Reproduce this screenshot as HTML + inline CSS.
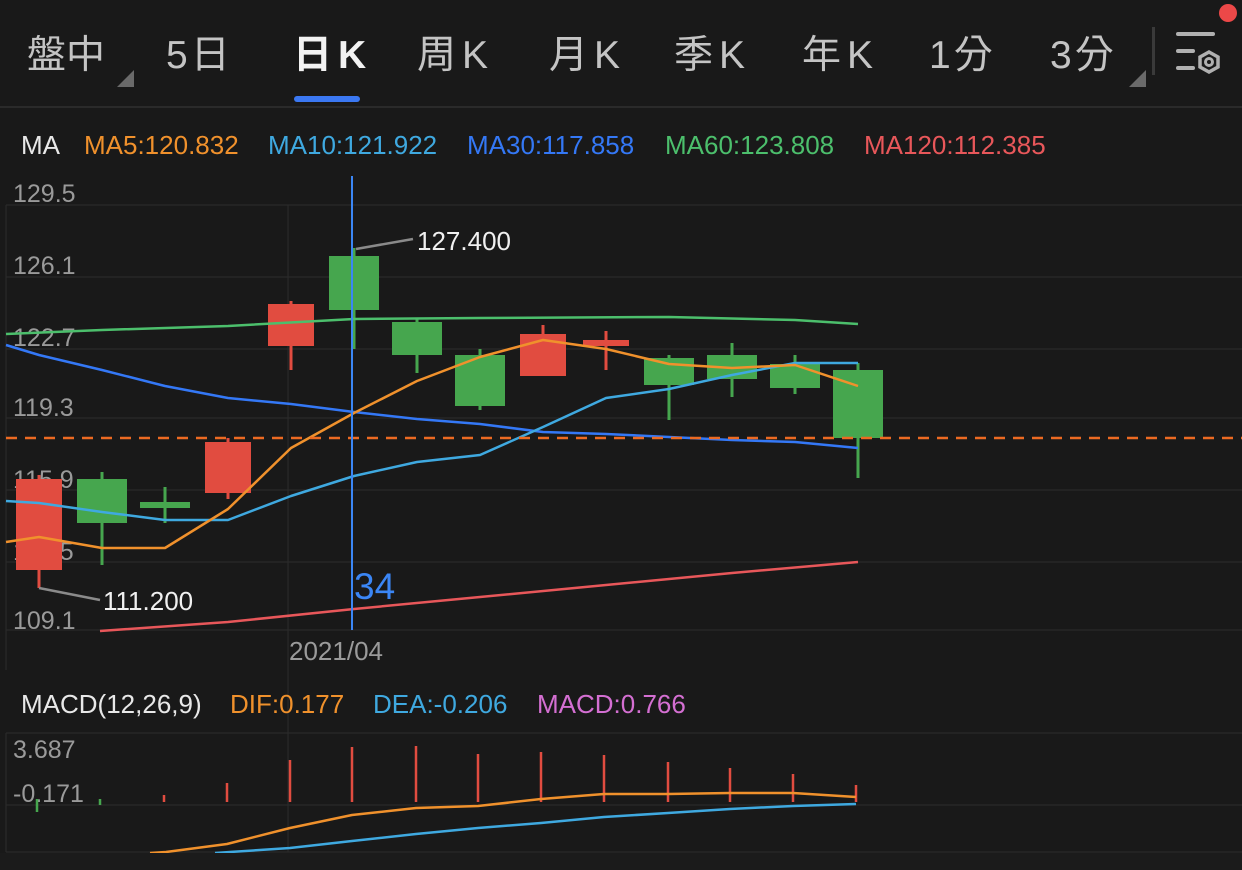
<!DOCTYPE html>
<html><head><meta charset="utf-8"><style>
html,body{margin:0;padding:0;background:#191919;}
svg{display:block;}
text{font-family:"Liberation Sans","Noto Sans CJK TC",sans-serif;}
</style></head><body>
<svg width="1242" height="870" viewBox="0 0 1242 870" xmlns="http://www.w3.org/2000/svg">
<rect width="1242" height="870" fill="#191919"/>
<!-- header -->
<g font-size="39" fill="#c4c4c4">
<text x="27" y="68">盤中</text>
<text x="166" y="68" letter-spacing="3">5日</text>
<text x="293" y="68" fill="#f2f2f2" font-weight="bold" letter-spacing="6">日K</text>
<text x="417" y="68" letter-spacing="6">周K</text>
<text x="549" y="68" letter-spacing="6">月K</text>
<text x="674" y="68" letter-spacing="6">季K</text>
<text x="802" y="68" letter-spacing="6">年K</text>
<text x="929" y="68" letter-spacing="3">1分</text>
<text x="1050" y="68" letter-spacing="3">3分</text>
</g>
<polygon points="134,70 134,87 117,87" fill="#6a6a6a"/>
<polygon points="1146,70 1146,87 1129,87" fill="#6a6a6a"/>
<rect x="294" y="96" width="66" height="6" rx="3" fill="#3b78f2"/>
<rect x="1152" y="27" width="3" height="48" fill="#3a3a3a"/>
<g stroke="#b0b0b0" stroke-width="4" stroke-linecap="round" fill="none">
<line x1="1178" y1="34" x2="1213" y2="34"/>
<line x1="1178" y1="51" x2="1193" y2="51"/>
<line x1="1178" y1="68" x2="1193" y2="68"/>
<polygon points="1209,52 1218,57 1218,67 1209,72 1200,67 1200,57" stroke-width="3.5"/>
<circle cx="1209" cy="62" r="3.5" stroke-width="3"/>
</g>
<circle cx="1228" cy="13" r="9" fill="#ec4848"/>
<rect x="0" y="106" width="1242" height="2" fill="#2a2a2a"/>
<!-- MA legend -->
<g font-size="26">
<text x="21" y="154" fill="#e8e8e8">MA</text>
<text x="84" y="154" fill="#f0912c">MA5:120.832</text>
<text x="268" y="154" fill="#3fa9e0">MA10:121.922</text>
<text x="467" y="154" fill="#3478f6">MA30:117.858</text>
<text x="665" y="154" fill="#4cbf6c">MA60:123.808</text>
<text x="864" y="154" fill="#e8575a">MA120:112.385</text>
</g>
<!-- grid -->
<g stroke="#2a2a2a" stroke-width="1.2">
<line x1="6" y1="205" x2="1242" y2="205"/>
<line x1="6" y1="277" x2="1242" y2="277"/>
<line x1="6" y1="349" x2="1242" y2="349"/>
<line x1="6" y1="418" x2="1242" y2="418"/>
<line x1="6" y1="490" x2="1242" y2="490"/>
<line x1="6" y1="562" x2="1242" y2="562"/>
<line x1="6" y1="630" x2="1242" y2="630"/>
<line x1="6" y1="205" x2="6" y2="670"/>
<line x1="288" y1="205" x2="288" y2="852"/>
<line x1="6" y1="733" x2="1242" y2="733"/>
<line x1="6" y1="805" x2="1242" y2="805"/>
<line x1="6" y1="852" x2="1242" y2="852"/>
<line x1="6" y1="733" x2="6" y2="852"/>
</g>
<g font-size="25" fill="#9a9a9a">
<text x="13" y="202">129.5</text>
<text x="13" y="274">126.1</text>
<text x="13" y="346">122.7</text>
<text x="13" y="416">119.3</text>
<text x="13" y="488">115.9</text>
<text x="13" y="560">112.5</text>
<text x="13" y="629">109.1</text>
<text x="289" y="660" font-size="26">2021/04</text>
</g>
<!-- candles -->
<g fill="#e14c40" stroke="#e14c40" stroke-width="3">
<line x1="39" y1="475" x2="39" y2="588"/><rect x="16" y="479" width="46" height="91" stroke="none"/>
<line x1="228" y1="438" x2="228" y2="499"/><rect x="205" y="442" width="46" height="51" stroke="none"/>
<line x1="291" y1="301" x2="291" y2="370"/><rect x="268" y="304" width="46" height="42" stroke="none"/>
<line x1="543" y1="325" x2="543" y2="376"/><rect x="520" y="334" width="46" height="42" stroke="none"/>
<line x1="606" y1="331" x2="606" y2="370"/><rect x="583" y="340" width="46" height="6" stroke="none"/>
</g>
<g fill="#46a64e" stroke="#46a64e" stroke-width="3">
<line x1="102" y1="472" x2="102" y2="565"/><rect x="77" y="479" width="50" height="44" stroke="none"/>
<line x1="165" y1="487" x2="165" y2="523"/><rect x="140" y="502" width="50" height="6" stroke="none"/>
<line x1="354" y1="248" x2="354" y2="349"/><rect x="329" y="256" width="50" height="54" stroke="none"/>
<line x1="417" y1="318" x2="417" y2="373"/><rect x="392" y="322" width="50" height="33" stroke="none"/>
<line x1="480" y1="349" x2="480" y2="410"/><rect x="455" y="355" width="50" height="51" stroke="none"/>
<line x1="669" y1="355" x2="669" y2="420"/><rect x="644" y="358" width="50" height="27" stroke="none"/>
<line x1="732" y1="343" x2="732" y2="397"/><rect x="707" y="355" width="50" height="24" stroke="none"/>
<line x1="795" y1="355" x2="795" y2="394"/><rect x="770" y="364" width="50" height="24" stroke="none"/>
<line x1="858" y1="363" x2="858" y2="478"/><rect x="833" y="370" width="50" height="68" stroke="none"/>
</g>
<!-- MA lines -->
<g fill="none" stroke-width="2.5" stroke-linejoin="round">
<polyline stroke="#e8575a" points="100,631 228,622 354,609 480,597 606,585 732,573 858,562"/>
<polyline stroke="#4cbf6c" points="6,334 102,330 228,326 354,319 480,318 669,317 795,320 858,324"/>
<polyline stroke="#3478f6" points="6,345 39,355 102,370 165,386 228,398 291,404 354,412 417,419 480,424 543,432 606,434 669,437 732,440 795,442 858,448"/>
<polyline stroke="#3fa9e0" points="6,501 39,503 102,512 165,520 228,520 291,496 354,476 417,462 480,455 543,427 606,398 669,389 732,375 795,363 858,363"/>
<polyline stroke="#f0912c" points="6,542 39,537 102,548 165,548 228,509 291,448 354,413 417,381 480,357 543,340 606,349 669,364 732,368 795,365 858,386"/>
</g>
<line x1="6" y1="438" x2="1242" y2="438" stroke="#ec6a22" stroke-width="2.5" stroke-dasharray="11,8"/>
<line x1="352" y1="176" x2="352" y2="630" stroke="#3b86f5" stroke-width="2"/>
<text x="354" y="599" font-size="37" fill="#3b86f5">34</text>
<g stroke="#8a8a8a" stroke-width="2.5" fill="none">
<polyline points="356,249 413,239"/>
<polyline points="39,588 100,600"/>
</g>
<g font-size="26" fill="#f0f0f0">
<text x="417" y="250">127.400</text>
<text x="103" y="610">111.200</text>
</g>
<!-- MACD -->
<g font-size="26">
<text x="21" y="713" fill="#e8e8e8">MACD(12,26,9)</text>
<text x="230" y="713" fill="#f0912c">DIF:0.177</text>
<text x="373" y="713" fill="#3fa9e0">DEA:-0.206</text>
<text x="537" y="713" fill="#d46fd2">MACD:0.766</text>
</g>
<g font-size="25" fill="#9a9a9a">
<text x="13" y="758">3.687</text>
<text x="13" y="802">-0.171</text>
</g>
<g stroke="#e14c40" stroke-width="2.5">
<line x1="164" y1="795" x2="164" y2="802"/>
<line x1="227" y1="783" x2="227" y2="802"/>
<line x1="290" y1="760" x2="290" y2="802"/>
<line x1="352" y1="747" x2="352" y2="802"/>
<line x1="416" y1="746" x2="416" y2="802"/>
<line x1="478" y1="754" x2="478" y2="802"/>
<line x1="541" y1="752" x2="541" y2="802"/>
<line x1="604" y1="755" x2="604" y2="802"/>
<line x1="668" y1="762" x2="668" y2="802"/>
<line x1="730" y1="768" x2="730" y2="802"/>
<line x1="793" y1="774" x2="793" y2="802"/>
<line x1="856" y1="785" x2="856" y2="802"/>
</g>
<g stroke="#46a64e" stroke-width="2.5">
<line x1="37" y1="799" x2="37" y2="812"/>
<line x1="100" y1="799" x2="100" y2="805"/>
</g>
<g fill="none" stroke-width="2.5" stroke-linejoin="round">
<polyline stroke="#f0912c" points="150,853 166,852 227,844 290,828 352,815 416,808 478,806 541,799 604,794 668,794 730,793 793,793 856,797"/>
<polyline stroke="#3fa9e0" points="215,853 230,852 290,848 352,841 416,834 478,828 541,823 604,817 668,813 730,809 793,806 856,804"/>
</g>
<rect x="0" y="853" width="1242" height="17" fill="#1b1b1b"/>
</svg>
</body></html>
